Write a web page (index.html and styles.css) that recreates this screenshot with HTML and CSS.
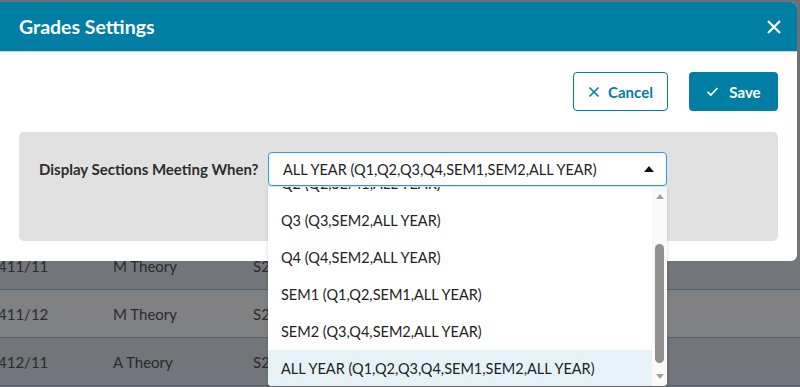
FILE: index.html
```html
<!DOCTYPE html>
<html>
<head>
  <meta charset="utf-8">
  <title>Grades Settings</title>
  <link rel="stylesheet" href="styles.css">
</head>
<body>
  <div class="page">
    <div class="page-top"></div>
    <div class="row dark">
      <span class="col-code">411/11</span>
      <span class="col-name">M Theory</span>
      <span class="col-term">S2</span>
    </div>
    <div class="row light">
      <span class="col-code">411/12</span>
      <span class="col-name">M Theory</span>
      <span class="col-term">S2</span>
    </div>
    <div class="row dark">
      <span class="col-code">412/11</span>
      <span class="col-name">A Theory</span>
      <span class="col-term">S2</span>
    </div>
  </div>

  <div class="modal">
    <div class="modal-header">
      <h2>Grades Settings</h2>
      <button type="button" class="close-btn" aria-label="Close">
        <svg width="16" height="16" viewBox="0 0 16 16"><path d="M2 2 L14 14 M14 2 L2 14" stroke="#fff" stroke-width="2.2" fill="none"/></svg>
      </button>
    </div>
    <div class="modal-body">
      <div class="actions">
        <button type="button" class="button outline">
          <svg width="12" height="12" viewBox="0 0 12 12"><path d="M1.5 1.5 L10.5 10.5 M10.5 1.5 L1.5 10.5" stroke="#007ea3" stroke-width="1.6" fill="none"/></svg>
          Cancel
        </button>
        <button type="button" class="button filled">
          <svg width="13" height="11" viewBox="0 0 13 11"><path d="M1.5 5.8 L4.8 9 L11.5 2" stroke="#fff" stroke-width="1.8" fill="none"/></svg>
          Save
        </button>
      </div>
      <div class="panel">
        <label class="field-label">Display Sections Meeting When?</label>
        <div class="select">
          <span>ALL YEAR (Q1,Q2,Q3,Q4,SEM1,SEM2,ALL YEAR)</span>
          <span class="caret"></span>
        </div>
      </div>
    </div>
  </div>

  <div class="dropdown">
    <div class="options">
      <div class="options-inner">
        <div class="option">Q2 (Q2,SEM1,ALL YEAR)</div>
        <div class="option">Q3 (Q3,SEM2,ALL YEAR)</div>
        <div class="option">Q4 (Q4,SEM2,ALL YEAR)</div>
        <div class="option">SEM1 (Q1,Q2,SEM1,ALL YEAR)</div>
        <div class="option">SEM2 (Q3,Q4,SEM2,ALL YEAR)</div>
        <div class="option selected">ALL YEAR (Q1,Q2,Q3,Q4,SEM1,SEM2,ALL YEAR)</div>
      </div>
    </div>
    <div class="scrollbar">
      <span class="arrow up"></span>
      <div class="track"><div class="thumb"></div></div>
      <span class="arrow down"></span>
    </div>
  </div>
</body>
</html>
```

FILE: styles.css
```css
body {
  margin: 0;
  font-family: Lato, "Liberation Sans", sans-serif;
  background-color: #6e7074;
  overflow: hidden;
  height: 387px;
}
.page {
  color: #2a2b2d;
  font-size: 15px;
}
.page-top {
  height: 242px;
}
.row {
  display: flex;
  align-items: center;
  height: 47px;
  border-bottom: 1px solid #4f6377;
}
.row.dark {
  background-color: #727579;
}
.row.light {
  background-color: #808183;
}
.row:first-of-type {
  align-items: flex-start;
}
.col-code {
  width: 115px;
  margin-left: -2px;
}
.col-name {
  width: 140px;
}
.modal {
  position: absolute;
  top: 2px;
  left: -6px;
  width: 803px;
  height: 259px;
  background-color: white;
  border-radius: 6px;
  overflow: hidden;
}
.modal-header {
  display: flex;
  align-items: center;
  justify-content: space-between;
  height: 49px;
  padding: 0 15px 0 25px;
  background-color: #007ea3;
  border-bottom: 1px solid #cfd4d6;
}
.modal-header h2 {
  margin: 0;
  color: white;
  font-size: 19.5px;
  font-weight: bold;
}
.close-btn {
  background: none;
  border: none;
  padding: 0;
  display: flex;
  cursor: pointer;
}
.modal-body {
  padding: 20px 19px 20px 25px;
}
.actions {
  display: flex;
  justify-content: flex-end;
  gap: 21px;
}
.button {
  display: flex;
  align-items: center;
  justify-content: center;
  gap: 8px;
  height: 39px;
  border-radius: 4px;
  font-family: Lato, "Liberation Sans", sans-serif;
  font-size: 15px;
  font-weight: bold;
  cursor: pointer;
  box-sizing: border-box;
}
.button.outline {
  width: 95px;
  background-color: white;
  color: #007ea3;
  border: 1px solid #007ea3;
}
.button.filled {
  width: 89px;
  background-color: #007ea3;
  color: white;
  border: none;
  gap: 10px;
}
.panel {
  display: flex;
  align-items: flex-start;
  gap: 10px;
  margin-top: 21px;
  height: 109px;
  padding: 20px 20px 0;
  box-sizing: border-box;
  background-color: #e1e1e1;
  border-radius: 5px;
}
.field-label {
  line-height: 34px;
  color: #2d2d2d;
  font-size: 15px;
  font-weight: bold;
  width: 219px;
  white-space: nowrap;
}
.select {
  display: flex;
  align-items: center;
  justify-content: space-between;
  width: 399px;
  height: 34px;
  padding: 0 12px 0 14px;
  box-sizing: border-box;
  background-color: white;
  border: 1px solid #22a0e8;
  border-radius: 4px;
  font-size: 14.5px;
  color: #222;
}
.caret {
  width: 0;
  height: 0;
  border-left: 5px solid transparent;
  border-right: 5px solid transparent;
  border-bottom: 6px solid #111;
}
.dropdown {
  position: absolute;
  top: 187px;
  left: 268px;
  width: 399px;
  height: 199px;
  display: flex;
  background-color: white;
  border-radius: 0 0 4px 4px;
  box-shadow: 0 2px 4px rgba(0,0,0,0.15);
  overflow: hidden;
}
.options {
  flex: 1;
  overflow: hidden;
}
.options-inner {
  margin-top: -22px;
}
.option {
  height: 37px;
  line-height: 37px;
  padding-left: 13px;
  font-size: 14.5px;
  color: #222;
  white-space: nowrap;
}
.option.selected {
  background-color: #e6f2f7;
}
.scrollbar {
  width: 15px;
  display: flex;
  flex-direction: column;
  align-items: center;
  background-color: #f9f9f9;
}
.arrow {
  width: 0;
  height: 0;
  border-left: 4px solid transparent;
  border-right: 4px solid transparent;
  margin: 7px 0;
}
.arrow.up {
  border-bottom: 5px solid #a3a3a3;
}
.arrow.down {
  border-top: 5px solid #a3a3a3;
}
.track {
  flex: 1;
  width: 100%;
  display: flex;
  justify-content: center;
  padding-top: 38px;
  padding-bottom: 4px;
  box-sizing: border-box;
}
.thumb {
  width: 9px;
  height: 100%;
  background-color: #8f8f8f;
  border-radius: 5px;
}
```
